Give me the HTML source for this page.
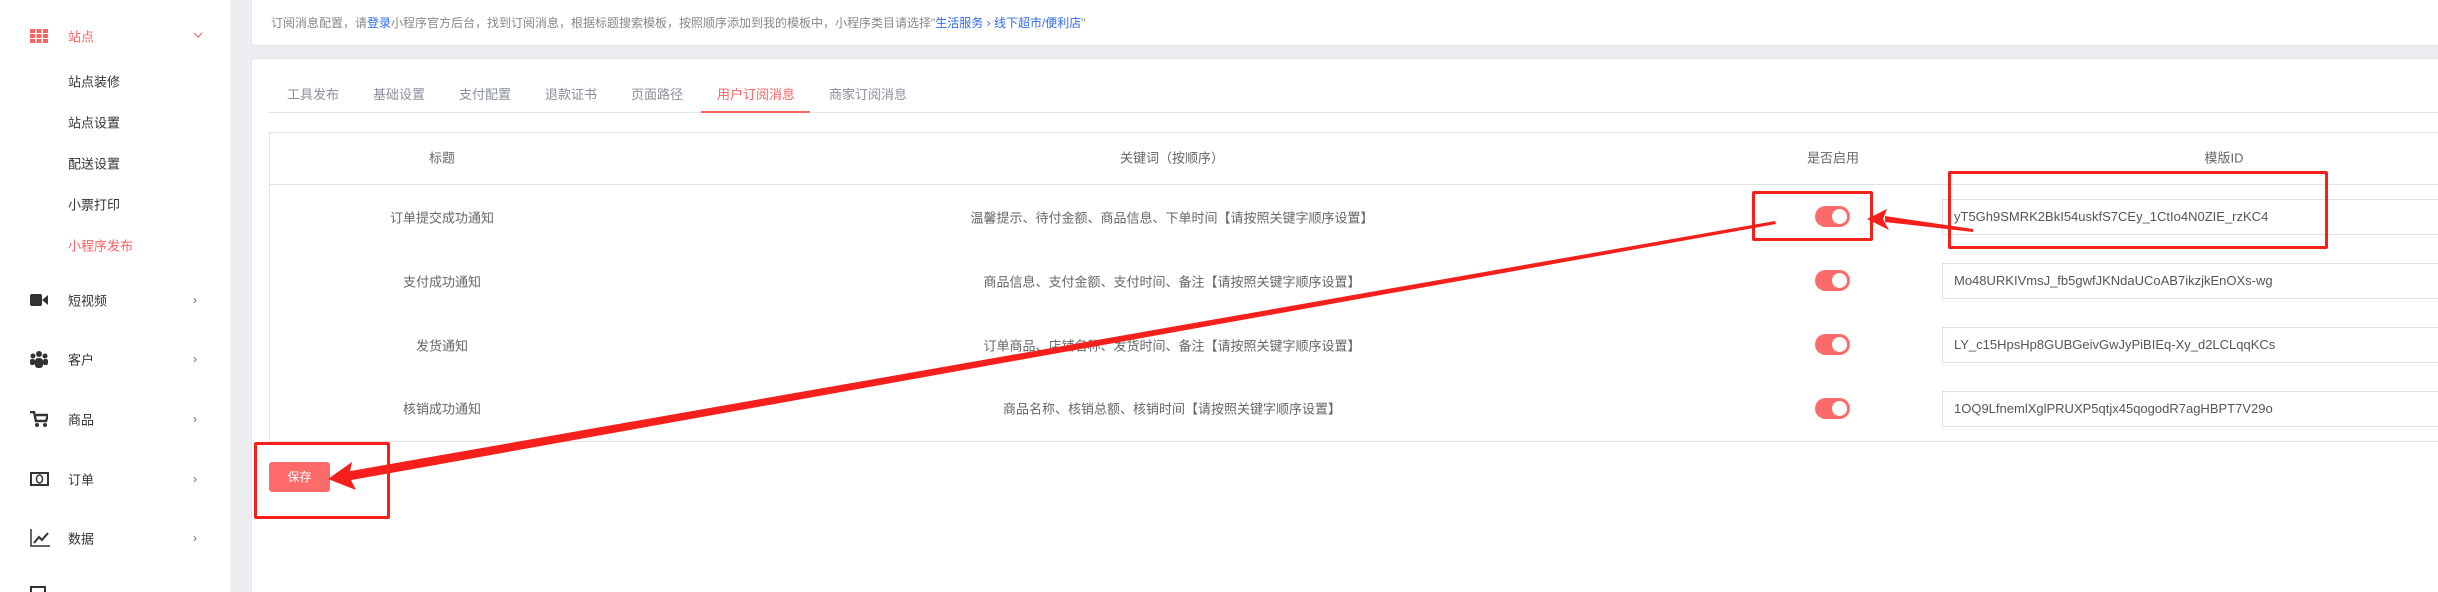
<!DOCTYPE html>
<html style="width:2438px;height:592px;overflow:hidden"><head><meta charset="utf-8"><style>
*{margin:0;padding:0;box-sizing:border-box}
body{width:2438px;height:592px;overflow:hidden;background:#eceef2;font-family:"Liberation Sans","Noto Sans CJK SC",sans-serif;position:relative;color:#555}
.a{position:absolute;white-space:nowrap}
#side{position:absolute;left:0;top:0;width:230px;height:592px;background:#fff}
.si{position:absolute;left:68px;font-size:13px;color:#333;transform:translateY(-50%)}
.chev{position:absolute;left:193px;font-size:12px;color:#666;transform:translateY(-50%)}
.card{position:absolute;background:#fff;border:1px solid #e3e5e9;border-radius:4px}
.tab{position:absolute;top:84px;font-size:13px;color:#8a8f99}
.c{position:absolute;transform:translate(-50%,-50%);font-size:13px;color:#666;white-space:nowrap}
.hl{position:absolute;left:269px;width:2200px;height:1px;background:#e3e3e3}
.tg{position:absolute;left:1815px;width:35px;height:21px;border-radius:11px;background:#ff6b6b}
.tg:after{content:"";position:absolute;right:3px;top:3px;width:15px;height:15px;border-radius:50%;background:#fff}
.in{position:absolute;left:1942px;width:520px;height:36px;border:1px solid #dcdfe6;font-size:13px;color:#555;padding-left:11px;line-height:34px}
.rb{position:absolute;border:3px solid #f5201b;border-radius:2px}
</style></head><body>
<div id="side">
 <svg class="a" style="left:30px;top:29px" width="18" height="14"><g fill="#ff6262"><rect x="0" y="0" width="5" height="4"/><rect x="6.5" y="0" width="5" height="4"/><rect x="13" y="0" width="5" height="4"/><rect x="0" y="5" width="5" height="4"/><rect x="6.5" y="5" width="5" height="4"/><rect x="13" y="5" width="5" height="4"/><rect x="0" y="10" width="5" height="4"/><rect x="6.5" y="10" width="5" height="4"/><rect x="13" y="10" width="5" height="4"/></g></svg>
 <div class="si" style="top:36px;color:#ff6262">站点</div>
 <svg class="a" style="left:193px;top:32px" width="10" height="7"><path d="M1 1l4 4 4-4" stroke="#ff6262" fill="none" stroke-width="1.2"/></svg>
 <div class="si" style="top:81px">站点装修</div>
 <div class="si" style="top:122px">站点设置</div>
 <div class="si" style="top:163px">配送设置</div>
 <div class="si" style="top:204px">小票打印</div>
 <div class="si" style="top:245px;color:#ff6262">小程序发布</div>
 <svg class="a" style="left:30px;top:293px" width="18" height="14"><rect x="0" y="1" width="12" height="12" rx="2" fill="#333"/><path d="M12 7l6-5v10z" fill="#333"/></svg>
 <div class="si" style="top:300px">短视频</div><div class="chev" style="top:300px">›</div>
 <svg class="a" style="left:30px;top:350px" width="18" height="18"><g fill="#333"><circle cx="9" cy="4" r="3"/><circle cx="3" cy="6" r="2.5"/><circle cx="15" cy="6" r="2.5"/><rect x="5" y="8" width="8" height="10" rx="3"/><rect x="0" y="9" width="5" height="6" rx="2"/><rect x="13" y="9" width="5" height="6" rx="2"/></g></svg>
 <div class="si" style="top:359px">客户</div><div class="chev" style="top:359px">›</div>
 <svg class="a" style="left:30px;top:411px" width="18" height="17"><path d="M0 1h4l2 9h10l2-6H6" stroke="#333" stroke-width="2.4" fill="none"/><circle cx="7" cy="14" r="2" fill="#333"/><circle cx="15" cy="14" r="2" fill="#333"/></svg>
 <div class="si" style="top:419px">商品</div><div class="chev" style="top:419px">›</div>
 <svg class="a" style="left:30px;top:472px" width="19" height="14"><rect x="1" y="1" width="17" height="12" fill="none" stroke="#333" stroke-width="2"/><ellipse cx="9.5" cy="7" rx="3" ry="4" fill="none" stroke="#333" stroke-width="1.5"/></svg>
 <div class="si" style="top:479px">订单</div><div class="chev" style="top:479px">›</div>
 <svg class="a" style="left:30px;top:529px" width="20" height="18"><path d="M1 0v17h19" stroke="#333" stroke-width="1.5" fill="none"/><path d="M4 14l5-6 3 3 6-7" stroke="#333" stroke-width="2" fill="none"/></svg>
 <div class="si" style="top:538px">数据</div><div class="chev" style="top:538px">›</div>
 <svg class="a" style="left:30px;top:586px" width="18" height="10"><rect x="1" y="1" width="14" height="12" fill="none" stroke="#333" stroke-width="2"/></svg>
</div>
<div class="card" style="left:251px;top:-6px;width:2200px;height:52px"></div>
<div class="a" style="left:271px;top:14px;font-size:12px;color:#888">订阅消息配置，请<span style="color:#2d6cf5">登录</span>小程序官方后台，找到订阅消息，根据标题搜索模板，按照顺序添加到我的模板中，小程序类目请选择"<span style="color:#2d6cf5">生活服务 › 线下超市/便利店</span>"</div>
<div class="card" style="left:251px;top:58px;width:2200px;height:540px"></div>
<div class="tab" style="left:287px">工具发布</div>
<div class="tab" style="left:373px">基础设置</div>
<div class="tab" style="left:459px">支付配置</div>
<div class="tab" style="left:545px">退款证书</div>
<div class="tab" style="left:631px">页面路径</div>
<div class="tab" style="left:717px;color:#ff6262">用户订阅消息</div>
<div class="tab" style="left:829px">商家订阅消息</div>
<div class="a" style="left:269px;top:112px;width:2200px;height:1px;background:#e3e3e3"></div>
<div class="a" style="left:701px;top:111px;width:109px;height:2px;background:#ff6262"></div>
<div class="hl" style="top:132px"></div>
<div class="hl" style="top:184px"></div>
<div class="hl" style="top:441px"></div>
<div class="a" style="left:269px;top:132px;width:1px;height:310px;background:#e3e3e3"></div>
<div class="c" style="left:442px;top:157px">标题</div>
<div class="c" style="left:1172px;top:157px">关键词（按顺序）</div>
<div class="c" style="left:1833px;top:157px">是否启用</div>
<div class="c" style="left:2224px;top:157px">模版ID</div>
<div class="c" style="left:442px;top:217px">订单提交成功通知</div>
<div class="c" style="left:1172px;top:217px">温馨提示、待付金额、商品信息、下单时间【请按照关键字顺序设置】</div>
<div class="c" style="left:442px;top:281px">支付成功通知</div>
<div class="c" style="left:1172px;top:281px">商品信息、支付金额、支付时间、备注【请按照关键字顺序设置】</div>
<div class="c" style="left:442px;top:345px">发货通知</div>
<div class="c" style="left:1172px;top:345px">订单商品、店铺名称、发货时间、备注【请按照关键字顺序设置】</div>
<div class="c" style="left:442px;top:408px">核销成功通知</div>
<div class="c" style="left:1172px;top:408px">商品名称、核销总额、核销时间【请按照关键字顺序设置】</div>
<div class="tg" style="top:206px"></div><div class="tg" style="top:270px"></div><div class="tg" style="top:334px"></div><div class="tg" style="top:398px"></div>
<div class="in" style="top:199px">yT5Gh9SMRK2BkI54uskfS7CEy_1CtIo4N0ZIE_rzKC4</div>
<div class="in" style="top:263px">Mo48URKIVmsJ_fb5gwfJKNdaUCoAB7ikzjkEnOXs-wg</div>
<div class="in" style="top:327px">LY_c15HpsHp8GUBGeivGwJyPiBIEq-Xy_d2LCLqqKCs</div>
<div class="in" style="top:391px">1OQ9LfnemlXglPRUXP5qtjx45qogodR7agHBPT7V29o</div>
<div class="a" style="left:269px;top:462px;width:61px;height:30px;background:#ff6b6b;border-radius:3px;color:#fff;font-size:12px;text-align:center;line-height:30px">保存</div>
<div class="rb" style="left:1752px;top:191px;width:121px;height:50px"></div>
<div class="rb" style="left:1948px;top:171px;width:380px;height:78px"></div>
<div class="rb" style="left:254px;top:442px;width:136px;height:77px"></div>
<svg class="a" style="left:0;top:0" width="2438" height="592">
 <path d="M1775 221 L345 472 L346 481 L1776 224 Z" fill="#f5201b"/>
 <path d="M328 479 L352 462 L349 476 L356 490 Z" fill="#f5201b"/>
 <path d="M1973 229 L1885 216 L1885 222 L1973 232 Z" fill="#f5201b"/>
 <path d="M1867 219 L1887 209 L1883 219 L1889 230 Z" fill="#f5201b"/>
</svg>
</body></html>
